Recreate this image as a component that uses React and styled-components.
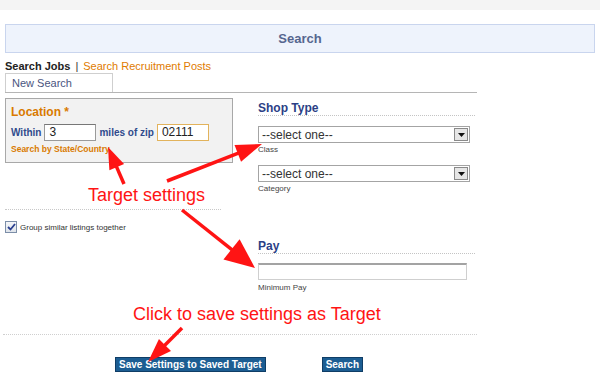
import React from 'react';
import styled, { createGlobalStyle } from 'styled-components';

const colors = {
  orange: '#d97a00',
  heading: '#2b3f86',
  label: '#2f4a8c',
  note: '#444',
  red: '#ff1414',
  button: '#1c5d92',
};

const GlobalStyle = createGlobalStyle`
  html, body {
    margin: 0;
    padding: 0;
    background: #fff;
  }
  body {
    font-family: "Liberation Sans", Arial, sans-serif;
    width: 600px;
    height: 382px;
    overflow: hidden;
  }
`;

const Page = styled.div`
  position: relative;
  width: 600px;
  height: 382px;
`;
const TopBand = styled.div`
  height: 10px;
  background: #f4f4f4;
`;
const Main = styled.div`
  padding: 14px 5px 0;
`;
const Header = styled.div`
  height: 27px;
  border: 1px solid #c9d5ee;
  background: #eef3fc;
  display: flex;
  align-items: center;
  justify-content: center;
  font-weight: bold;
  font-size: 13px;
  color: #56668f;
`;
const LinkRow = styled.div`
  margin-top: 7px;
  font-size: 11px;
  line-height: 13px;
  color: #333;
  b {
    color: #222;
  }
  span {
    margin: 0 5px;
  }
  a {
    color: #e07b00;
    text-decoration: none;
  }
`;
const Tabs = styled.div`
  width: 472px;
  height: 19px;
  border-bottom: 1px solid #b5b5b5;
  display: flex;
`;
const Tab = styled.div`
  width: 108px;
  height: 19px;
  border: 1px solid #cfcfcf;
  border-bottom: none;
  box-sizing: border-box;
  padding-left: 6px;
  font-size: 11px;
  line-height: 19px;
  color: #4a5580;
`;
const Content = styled.div`
  display: flex;
  width: 472px;
  margin-top: 5px;
`;
const LeftCol = styled.div`
  width: 228px;
`;
const RightCol = styled.div`
  width: 217px;
  margin-left: 25px;
  padding-top: 3px;
`;
const LocationBox = styled.div`
  height: 65px;
  box-sizing: border-box;
  border: 1px solid #a8a8a8;
  background: #f2f2f2;
  padding: 6px 5px 0;
`;
const LocationTitle = styled.div`
  font-size: 12px;
  font-weight: bold;
  line-height: 15px;
  color: ${colors.orange};
`;
const FieldRow = styled.div`
  display: flex;
  align-items: center;
  margin-top: 4px;
  gap: 3px;
`;
const InlineLabel = styled.span`
  font-size: 10px;
  font-weight: bold;
  color: ${colors.label};
`;
const TextBox = styled.div`
  width: ${p => p.$w}px;
  height: 17px;
  box-sizing: border-box;
  border: 1px solid ${p => (p.$focus ? '#e2b35c' : '#9a9a9a')};
  border-top-color: ${p => (p.$focus ? '#e2b35c' : '#777')};
  background: #fff;
  font-size: 12px;
  line-height: 15px;
  padding-left: 4px;
  color: #222;
`;
const StateLink = styled.div`
  margin-top: 3px;
  font-size: 8.5px;
  font-weight: bold;
  line-height: 11px;
  color: ${colors.orange};
`;
const Divider = styled.div`
  width: 216px;
  margin-top: ${p => p.$top}px;
  border-top: 1px dotted #c8c8c8;
`;
const CheckRow = styled.div`
  display: flex;
  align-items: center;
  gap: 3px;
  margin-top: 11px;
  font-size: 8px;
  color: #333;
`;
const CheckBox = styled.div`
  width: 12px;
  height: 12px;
  box-sizing: border-box;
  border: 1px solid #7c8ea8;
  background: linear-gradient(#f4f6f9, #dfe4ea);
  display: flex;
  align-items: center;
  justify-content: center;
`;
const SectionHead = styled.div`
  margin-top: ${p => p.$top || 0}px;
  font-size: 12px;
  font-weight: bold;
  line-height: 14px;
  color: ${colors.heading};
  border-bottom: 1px dotted #c4c4c4;
`;
const SelectBox = styled.div`
  width: 212px;
  height: 17px;
  margin-top: ${p => p.$top}px;
  box-sizing: border-box;
  border: 1px solid #a4a4a4;
  background: #fff;
  display: flex;
  align-items: center;
  justify-content: space-between;
  font-size: 12px;
  color: #333;
  padding-left: 3px;
`;
const DropButton = styled.div`
  width: 14px;
  height: 13px;
  margin-right: 1px;
  box-sizing: border-box;
  border: 1px solid #8a8a8a;
  background: #e6e6e6;
  display: flex;
  align-items: center;
  justify-content: center;
`;
const PayInput = styled.div`
  width: 209px;
  height: 17px;
  margin-top: 9px;
  box-sizing: border-box;
  border: 1px solid #cfcfcf;
  border-top: 2px solid #a3a3a3;
  background: #fff;
`;
const FieldNote = styled.div`
  margin-top: ${p => p.$top || 2}px;
  font-size: 8px;
  line-height: 10px;
  color: ${colors.note};
`;
const Separator = styled.div`
  width: 474px;
  margin: 41px 0 0 -2px;
  border-top: 1px dotted #cfcfcf;
`;
const ButtonRow = styled.div`
  display: flex;
  gap: 56px;
  margin-top: 22px;
  padding-left: 110px;
`;
const Button = styled.div`
  height: 15px;
  box-sizing: border-box;
  padding: 0 3px;
  border: 1px solid #0f3d66;
  background: ${colors.button};
  color: #fff;
  font-size: 10px;
  font-weight: bold;
  line-height: 13px;
  white-space: nowrap;
`;
const Callout = styled.div`
  position: absolute;
  left: ${p => p.$x}px;
  top: ${p => p.$y}px;
  font-size: 18px;
  line-height: 20px;
  color: ${colors.red};
  white-space: nowrap;
`;
const Overlay = styled.svg`
  position: absolute;
  left: 0;
  top: 0;
  pointer-events: none;
`;

const Arrow = ({ from, to, head, width }) => {
  const [x1, y1] = from;
  const [x2, y2] = to;
  const len = Math.hypot(x2 - x1, y2 - y1);
  const ux = (x2 - x1) / len;
  const uy = (y2 - y1) / len;
  const bx = x2 - ux * head;
  const by = y2 - uy * head;
  const px = (-uy * width) / 2;
  const py = (ux * width) / 2;
  return (
    <g>
      <line x1={x1} y1={y1} x2={bx + ux * 2} y2={by + uy * 2} stroke={colors.red} strokeWidth="3.5" />
      <polygon points={`${x2},${y2} ${bx + px},${by + py} ${bx - px},${by - py}`} fill={colors.red} />
    </g>
  );
};

const Select = ({ top }) => (
  <SelectBox $top={top}>
    --select one--
    <DropButton>
      <svg width="7" height="4" viewBox="0 0 7 4">
        <polygon points="0,0 7,0 3.5,4" fill="#111" />
      </svg>
    </DropButton>
  </SelectBox>
);

export default function App() {
  return (
    <Page>
      <GlobalStyle />
      <TopBand />
      <Main>
        <Header>Search</Header>
        <LinkRow>
          <b>Search Jobs</b>
          <span>|</span>
          <a href="#recruit">Search Recruitment Posts</a>
        </LinkRow>
        <Tabs>
          <Tab>New Search</Tab>
        </Tabs>
        <Content>
          <LeftCol>
            <LocationBox>
              <LocationTitle>Location *</LocationTitle>
              <FieldRow>
                <InlineLabel>Within</InlineLabel>
                <TextBox $w={52}>3</TextBox>
                <InlineLabel>miles of zip</InlineLabel>
                <TextBox $w={52} $focus>02111</TextBox>
              </FieldRow>
              <StateLink>Search by State/Country</StateLink>
            </LocationBox>
            <Divider $top={46} />
            <CheckRow>
              <CheckBox>
                <svg width="9" height="8" viewBox="0 0 9 8">
                  <path d="M1 4 L3.5 6.5 L8 1" stroke="#2a3f8f" strokeWidth="1.8" fill="none" />
                </svg>
              </CheckBox>
              Group similar listings together
            </CheckRow>
          </LeftCol>
          <RightCol>
            <SectionHead>Shop Type</SectionHead>
            <Select top={10} />
            <FieldNote>Class</FieldNote>
            <Select top={10} />
            <FieldNote>Category</FieldNote>
            <SectionHead $top={45}>Pay</SectionHead>
            <PayInput />
            <FieldNote $top={3}>Minimum Pay</FieldNote>
          </RightCol>
        </Content>
        <Separator />
        <ButtonRow>
          <Button>Save Settings to Saved Target</Button>
          <Button>Search</Button>
        </ButtonRow>
      </Main>

      <Callout $x={88} $y={185}>Target settings</Callout>
      <Callout $x={133} $y={304}>Click to save settings as Target</Callout>
      <Overlay width="600" height="382" viewBox="0 0 600 382">
        <Arrow from={[124, 184]} to={[108, 147]} head={22} width={16} />
        <Arrow from={[167, 181]} to={[262, 144]} head={26} width={18} />
        <Arrow from={[182, 210]} to={[255, 268]} head={30} width={26} />
        <Arrow from={[182, 328]} to={[148, 362]} head={24} width={17} />
      </Overlay>
    </Page>
  );
}
